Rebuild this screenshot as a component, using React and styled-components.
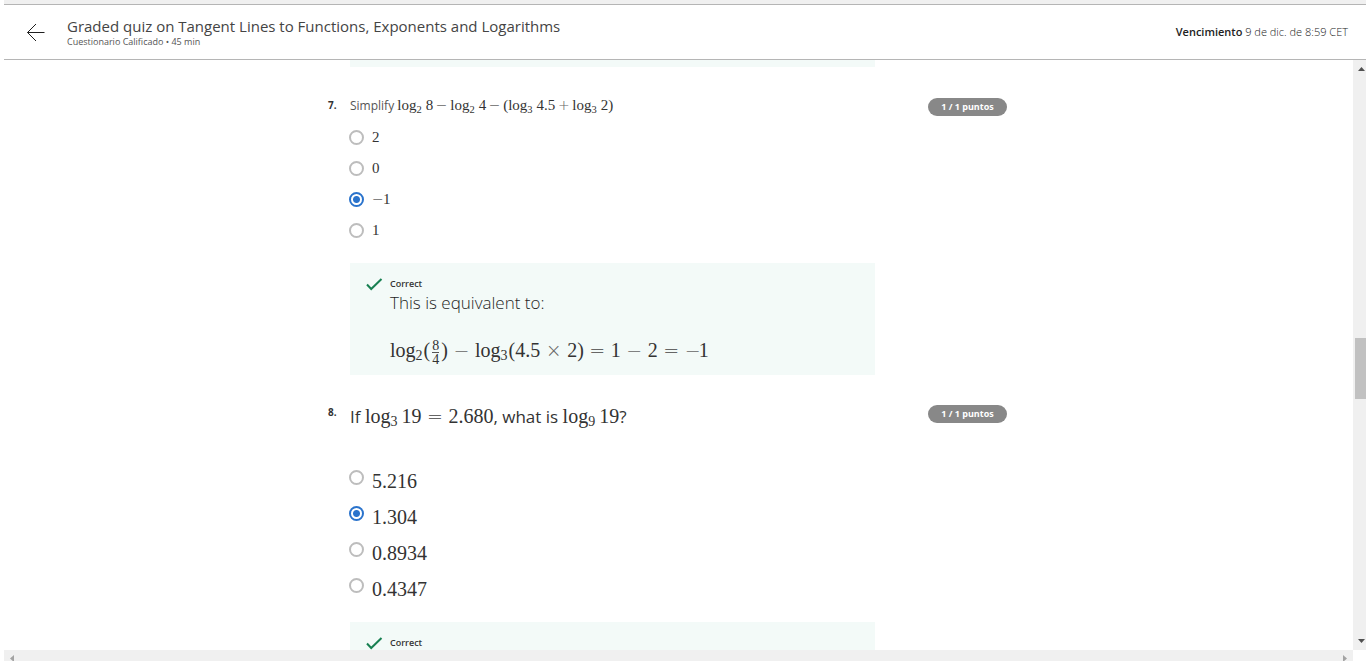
import React from "react";
import styled, { createGlobalStyle } from "styled-components";

const GlobalStyle = createGlobalStyle`
  *, *::before, *::after { box-sizing: border-box; }
  body { margin: 0; background: #fff; color: #333; font-family: "Open Sans", sans-serif; }
  p, h1, h2 { margin: 0; font-weight: 300; }
`;

const Page = styled.div`
  display: flex;
  flex-direction: column;
  height: 100vh;
  overflow: hidden;
  padding-left: 4px;
`;

const TopStrip = styled.div`
  flex: none;
  height: 4px;
  background: #f0f0f0;
`;

const Header = styled.header`
  flex: none;
  display: flex;
  align-items: center;
  height: 56px;
  padding: 0 18px 0 22px;
  border-top: 1px solid #b5b5b5;
  border-bottom: 1px solid #b5b5b5;
`;

const BackButton = styled.button`
  display: flex;
  padding: 0;
  margin-right: 22px;
  border: 0;
  background: none;
  color: #1f1f1f;
`;

const HeaderText = styled.div`
  flex: 1;
`;

const Title = styled.h1`
  font-size: 15px;
  line-height: 20px;
  font-weight: 400;
  color: #444;
`;

const Subtitle = styled.p`
  font-size: 9px;
  line-height: 12px;
  font-weight: 400;
  color: #555;
`;

const Due = styled.p`
  font-size: 11px;
  line-height: 16px;
  color: #222;
  strong { font-weight: 600; }
`;

const Body = styled.div`
  flex: 1;
  min-height: 0;
  display: grid;
  grid-template-columns: 1fr 13px;
  grid-template-rows: 1fr 11px;
`;

const Content = styled.main`
  min-height: 0;
  overflow: hidden;
  padding-right: 23px;
`;

const Column = styled.div`
  max-width: 680px;
  margin: 0 auto;
`;

const PreviousFeedback = styled.div`
  height: 7px;
  margin: 0 132px 0 23px;
  background: #f3faf8;
`;

const Question = styled.section`
  display: grid;
  grid-template-columns: 22px 1fr 53px 79px;
  padding-top: ${(p) => (p.$large ? 28 : 29)}px;
`;

const Number = styled.span`
  padding: 1px 0 0 1px;
  font-size: 10px;
  line-height: 16px;
  font-weight: 700;
`;

const Score = styled.span`
  grid-column: 4;
  height: 18px;
  margin-top: 2px;
  border-radius: 9px;
  background: #888;
  color: #fff;
  font-size: 9px;
  line-height: 18px;
  font-weight: 700;
  text-align: center;
`;

const Choices = styled.fieldset`
  min-width: 0;
  margin: 0;
  padding: 0;
  border: 0;
`;

const Prompt = styled.legend`
  height: ${(p) => (p.$large ? 28 : 20)}px;
  padding: 0 0 0 1px;
  margin-bottom: ${(p) => (p.$large ? 39 : 6)}px;
  font-size: ${(p) => (p.$large ? 17 : 12)}px;
  line-height: ${(p) => (p.$large ? 28 : 20)}px;
  color: ${(p) => (p.$large ? "#333" : "#555")};
  white-space: nowrap;
`;

const Choice = styled.label`
  display: flex;
  align-items: ${(p) => (p.$large ? "flex-start" : "center")};
  gap: 8px;
  height: ${(p) => (p.$large ? 36 : 31)}px;
`;

const Radio = styled.input`
  appearance: none;
  flex: none;
  width: 15px;
  height: 15px;
  margin: 0;
  border: 2px solid #bdbdbd;
  border-radius: 50%;
  background: #fff;
  &:checked {
    border-color: #2a73cc;
    background: radial-gradient(circle, #2a73cc 0 3px, #fff 4px);
  }
`;

const MathText = styled.span`
  font-family: "Liberation Serif", serif;
  font-size: ${(p) => (p.$large ? 20 : 15)}px;
  font-weight: 400;
  line-height: ${(p) => (p.$large ? 22 : 18)}px;
  color: #333;
  white-space: nowrap;
`;

const OptionText = styled(MathText)`
  padding-bottom: ${(p) => (p.$large ? 0 : 2)}px;
`;

const Sub = styled.span`
  display: inline-block;
  margin-right: ${(p) => (p.$tight ? 1 : 4)}px;
  font-size: 70%;
  line-height: 1;
  position: relative;
  top: 3px;
`;

const opWidth = (p) => {
  if (p.$sign) return p.$large ? 14 : 11;
  return p.$large ? 27 : 17;
};

const Op = styled.span`
  display: inline-block;
  width: ${opWidth}px;
  font-family: "DejaVu Sans", sans-serif;
  font-size: ${(p) => (p.$large ? 19 : 14)}px;
  font-weight: 200;
  line-height: 1;
  text-align: center;
  color: #666;
`;

const Fraction = styled.span`
  display: inline-flex;
  flex-direction: column;
  vertical-align: middle;
  margin: 0 2px;
  font-size: 14px;
  line-height: 13px;
  text-align: center;
  span:first-child { border-bottom: 1px solid #555; }
`;

const Feedback = styled.div`
  grid-column: 2;
  display: flex;
  gap: 7px;
  height: 112px;
  margin-top: ${(p) => (p.$large ? 8 : 17)}px;
  margin-left: 1px;
  padding: 14px 16px;
  background: #f3faf8;
  svg { flex: none; }
`;

const Verdict = styled.p`
  font-size: 9px;
  line-height: 14px;
  font-weight: 600;
`;

const Explanation = styled.p`
  font-size: 17px;
  line-height: 24px;
  margin-bottom: 24px;
  color: #1f1f1f;
`;

const VerticalBar = styled.div`
  display: flex;
  flex-direction: column;
  padding: 7px 0 7px 2px;
  background: #f0f0f0;
  svg { flex: none; margin-left: 3px; }
`;

const Space = styled.div`
  flex: ${(p) => p.$grow} 0 0;
`;

const Thumb = styled.div`
  flex: 61 0 0;
  background: #c1c1c1;
`;

const HorizontalBar = styled.div`
  display: flex;
  justify-content: space-between;
  padding: 5px 6px 0;
  background: #f0f0f0;
`;

const Check = () => (
  <svg width="17" height="14" viewBox="0 0 17 14" fill="none" aria-hidden="true">
    <path d="M1 7.5L5.2 12L15.5 2" stroke="#188052" strokeWidth="2" />
  </svg>
);

const Log = ({ base, tight }) => (
  <>log<Sub $tight={tight}>{base}</Sub></>
);

function Options({ name, values, selected, large }) {
  return values.map((value) => (
    <Choice key={value} $large={large}>
      <Radio type="radio" name={name} defaultChecked={value === selected} />
      <OptionText $large={large}>
        {value.startsWith("−") ? <><Op $sign>−</Op>{value.slice(1)}</> : value}
      </OptionText>
    </Choice>
  ));
}

export default function App() {
  return (
    <>
      <GlobalStyle />
      <Page>
        <TopStrip />
        <Header>
          <BackButton type="button" aria-label="Volver">
            <svg width="19" height="19" viewBox="0 0 19 19" fill="none" stroke="currentColor">
              <path d="M1.5 9.5H18.5M10 1L1.5 9.5L10 18" />
            </svg>
          </BackButton>
          <HeaderText>
            <Title>Graded quiz on Tangent Lines to Functions, Exponents and Logarithms</Title>
            <Subtitle>Cuestionario Calificado • 45 min</Subtitle>
          </HeaderText>
          <Due><strong>Vencimiento</strong> 9 de dic. de 8:59 CET</Due>
        </Header>
        <Body>
          <Content>
            <Column>
              <PreviousFeedback />
              <Question>
                <Number>7.</Number>
                <Choices>
                  <Prompt>
                    Simplify{" "}
                    <MathText>
                      <Log base="2" />8<Op>−</Op><Log base="2" />4<Op>−</Op>(<Log base="3" />4.5<Op>+</Op><Log base="3" />2)
                    </MathText>
                  </Prompt>
                  <Options name="q7" values={["2", "0", "−1", "1"]} selected="−1" />
                </Choices>
                <Score>1 / 1 puntos</Score>
                <Feedback>
                  <Check />
                  <div>
                    <Verdict>Correct</Verdict>
                    <Explanation>This is equivalent to:</Explanation>
                    <MathText $large>
                      <Log base="2" tight />(<Fraction><span>8</span><span>4</span></Fraction>)<Op $large>−</Op>
                      <Log base="3" tight />(4.5<Op $large>×</Op>2)<Op $large>=</Op>1<Op $large>−</Op>2<Op $large>=</Op><Op $large $sign>−</Op>1
                    </MathText>
                  </div>
                </Feedback>
              </Question>
              <Question $large>
                <Number>8.</Number>
                <Choices>
                  <Prompt $large>
                    If <MathText $large><Log base="3" />19<Op $large>=</Op>2.680</MathText>, what is{" "}
                    <MathText $large><Log base="9" />19</MathText>?
                  </Prompt>
                  <Options name="q8" values={["5.216", "1.304", "0.8934", "0.4347"]} selected="1.304" large />
                </Choices>
                <Score>1 / 1 puntos</Score>
                <Feedback $large>
                  <Check />
                  <div>
                    <Verdict>Correct</Verdict>
                  </div>
                </Feedback>
              </Question>
            </Column>
          </Content>
          <VerticalBar>
            <svg width="7" height="4" viewBox="0 0 7 4"><path d="M0 4L3.5 0L7 4Z" fill="#505050" /></svg>
            <Space $grow={267} />
            <Thumb />
            <Space $grow={240} />
            <svg width="7" height="4" viewBox="0 0 7 4"><path d="M0 0L3.5 4L7 0Z" fill="#505050" /></svg>
          </VerticalBar>
          <HorizontalBar>
            <svg width="4" height="7" viewBox="0 0 4 7"><path d="M4 0L0 3.5L4 7Z" fill="#a3a3a3" /></svg>
            <svg width="4" height="7" viewBox="0 0 4 7"><path d="M0 0L4 3.5L0 7Z" fill="#a3a3a3" /></svg>
          </HorizontalBar>
        </Body>
      </Page>
    </>
  );
}
